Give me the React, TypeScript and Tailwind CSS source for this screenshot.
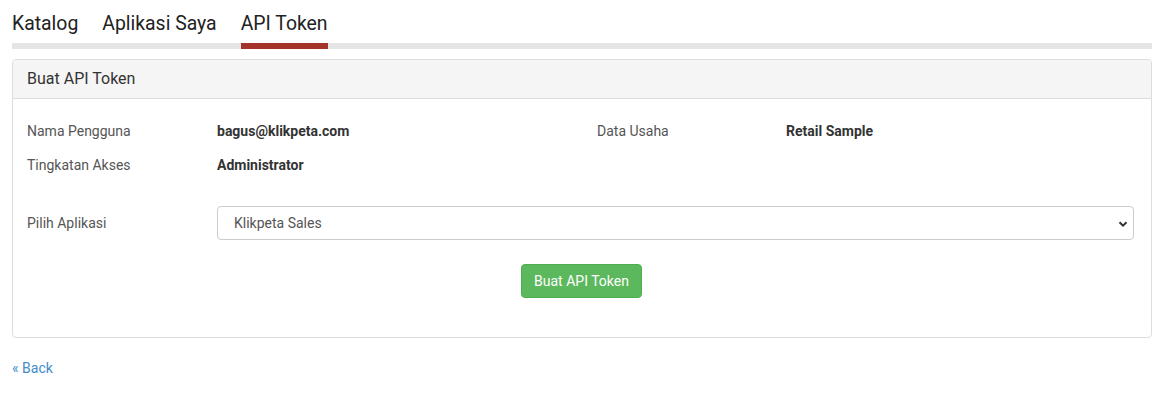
export default function App() {
  return (
    <div className="min-h-screen bg-white px-[12px] pt-[12px] text-[14px] text-[#333]" style={{ fontFamily: 'Roboto, "Noto Sans", sans-serif' }}>
      <div className="flex border-b-[6px] border-[#e5e5e5]">
        <div className="mr-[24px] h-[31px] text-[19.4px] leading-[24px] text-[#222]">Katalog</div>
        <div className="mr-[24px] h-[31px] text-[19.4px] leading-[24px] text-[#222]">Aplikasi Saya</div>
        <div className="-mb-[6px] h-[37px] border-b-[6px] border-[#a3342a] text-[19.4px] leading-[24px] text-[#222]">API Token</div>
      </div>

      <div className="mt-[10px] rounded-[4px] border border-[#ddd]">
        <div className="flex h-[39px] items-center rounded-t-[4px] border-b border-[#ddd] bg-[#f5f5f5] px-[14px] text-[16px] text-[#333]">
          Buat API Token
        </div>
        <div className="pb-[39px] pl-[14px] pr-[15px] pt-[15px]">
          <div className="grid grid-cols-[190px_380px_189px_1fr]">
            <div className="h-[34px] leading-[34px] text-[#555]">Nama Pengguna</div>
            <div className="h-[34px] font-bold leading-[34px]">bagus@klikpeta.com</div>
            <div className="h-[34px] leading-[34px] text-[#555]">Data Usaha</div>
            <div className="h-[34px] font-bold leading-[34px]">Retail Sample</div>
            <div className="h-[34px] leading-[34px] text-[#555]">Tingkatan Akses</div>
            <div className="h-[34px] font-bold leading-[34px]">Administrator</div>
          </div>

          <div className="mt-[24px] flex items-center">
            <div className="w-[190px] text-[#555]">Pilih Aplikasi</div>
            <div className="relative mr-[2px] flex h-[34px] flex-1 items-center rounded-[4px] border border-[#ccc] pl-[16px] text-[#555]">
              Klikpeta Sales
              <svg className="absolute right-[4px] top-[11px]" width="12" height="12" viewBox="0 0 12 12">
                <path d="M2.5 4.2 L6 7.6 L9.5 4.2" fill="none" stroke="#333" strokeWidth="2" />
              </svg>
            </div>
          </div>

          <div className="mt-[24px] flex justify-center">
            <button className="h-[34px] rounded-[4px] border border-[#4cae4c] bg-[#5cb85c] px-[12px] text-[14px] text-white">
              Buat API Token
            </button>
          </div>
        </div>
      </div>

      <div className="mt-[20px] leading-[20px]">
        <a href="#" className="text-[#428bca]">« Back</a>
      </div>
    </div>
  );
}
